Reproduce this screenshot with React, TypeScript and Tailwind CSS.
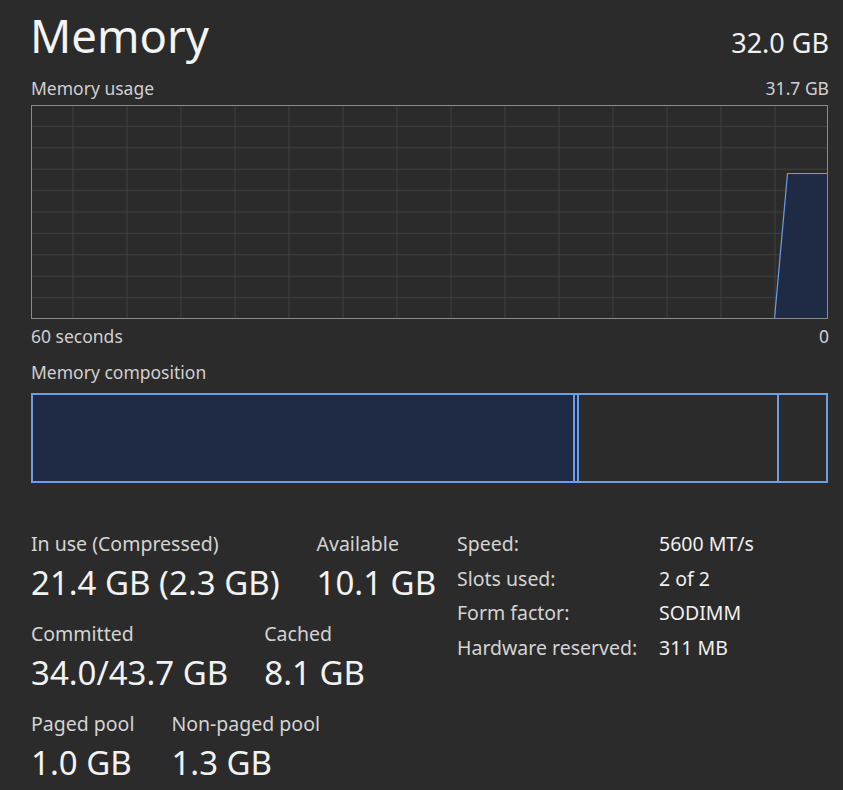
import React from 'react';

const GRAPH_W = 797;
const GRAPH_H = 214;

const hLines = Array.from({ length: 9 }, (_, i) => ((i + 1) * GRAPH_H) / 10);
const vLines = Array.from({ length: 14 }, (_, i) => 42 + i * 54);

const UsageGraph: React.FC = () => (
    <svg width={GRAPH_W} height={GRAPH_H} viewBox={`0 0 ${GRAPH_W} ${GRAPH_H}`} className="block">
        {hLines.map(y => (
            <line key={`h${y}`} x1={0} x2={GRAPH_W} y1={y} y2={y} stroke="#404040" strokeWidth={1} />
        ))}
        {vLines.map(x => (
            <line key={`v${x}`} x1={x} x2={x} y1={0} y2={GRAPH_H} stroke="#404040" strokeWidth={1} />
        ))}
        <polygon points={`743.5,${GRAPH_H} 756.5,68.5 ${GRAPH_W},68.5 ${GRAPH_W},${GRAPH_H}`} fill="#1f2a44" />
        <polyline points={`743.5,${GRAPH_H} 756.5,68.5 ${GRAPH_W},68.5`} fill="none" stroke="#6a9fe8" strokeWidth={1.2} />
        <rect x={0.5} y={0.5} width={GRAPH_W - 1} height={GRAPH_H - 1} fill="none" stroke="#8a8a8a" strokeWidth={1} />
    </svg>
);

const Stat: React.FC<{ label: string; value: string }> = ({ label, value }) => (
    <div className="flex flex-col">
        <span className="text-[19.5px] leading-[24px] text-[#d4d4d4]">{label}</span>
        <span className="mt-[8px] text-[33px] leading-[38px] text-[#f2f2f2]">{value}</span>
    </div>
);

const specs: [string, string][] = [
    ['Speed:', '5600 MT/s'],
    ['Slots used:', '2 of 2'],
    ['Form factor:', 'SODIMM'],
    ['Hardware reserved:', '311 MB'],
];

export default function App() {
    return (
        <div
            className="w-[843px] h-[790px] overflow-hidden bg-[#2b2b2b] pl-[31px] pr-[14px] pt-[7px] text-[#e6e6e6]"
            style={{ fontFamily: '"Noto Sans", "Open Sans", sans-serif' }}
        >
            {/* Header */}
            <div className="flex items-baseline justify-between">
                <h1 className="-ml-[1px] text-[45.5px] leading-[56px] text-[#f4f4f4]">Memory</h1>
                <span className="text-[27px] leading-[34px] text-[#f0f0f0]">32.0 GB</span>
            </div>

            {/* Memory usage graph */}
            <div className="mt-[14px] flex justify-between text-[17.5px] leading-[22px] text-[#d0d0d0]">
                <span>Memory usage</span>
                <span>31.7 GB</span>
            </div>
            <div className="mt-[6px]">
                <UsageGraph />
            </div>
            <div className="mt-[6px] flex justify-between text-[17.5px] leading-[22px] text-[#d0d0d0]">
                <span>60 seconds</span>
                <span>0</span>
            </div>

            {/* Memory composition */}
            <div className="mt-[14px] text-[17.5px] leading-[22px] text-[#d0d0d0]">Memory composition</div>
            <div className="mt-[10px] flex h-[90px] w-[797px]">
                <div className="w-[544px] border-2 border-[#6b9ee8] bg-[#1f2a44]" />
                <div className="-ml-[2px] w-[6px] border-2 border-[#6b9ee8] bg-[#1f2a44]" />
                <div className="-ml-[2px] w-[202px] border-2 border-[#6b9ee8]" />
                <div className="-ml-[2px] flex-1 border-2 border-[#6b9ee8]" />
            </div>

            {/* Stats */}
            <div className="mt-[49px] flex items-start">
                <div className="flex w-[426px] shrink-0 flex-col gap-[20px]">
                    <div className="flex gap-[37px]">
                        <Stat label="In use (Compressed)" value="21.4 GB (2.3 GB)" />
                        <Stat label="Available" value="10.1 GB" />
                    </div>
                    <div className="flex gap-[36px]">
                        <Stat label="Committed" value="34.0/43.7 GB" />
                        <Stat label="Cached" value="8.1 GB" />
                    </div>
                    <div className="flex gap-[37px]">
                        <Stat label="Paged pool" value="1.0 GB" />
                        <Stat label="Non-paged pool" value="1.3 GB" />
                    </div>
                </div>
                <div className="grid grid-cols-[202px_auto] content-start gap-y-[10.5px] text-[19.5px] leading-[24px]">
                    {specs.map(([k, v]) => (
                        <React.Fragment key={k}>
                            <span className="text-[#d4d4d4]">{k}</span>
                            <span className="text-[#f0f0f0]">{v}</span>
                        </React.Fragment>
                    ))}
                </div>
            </div>
        </div>
    );
}
